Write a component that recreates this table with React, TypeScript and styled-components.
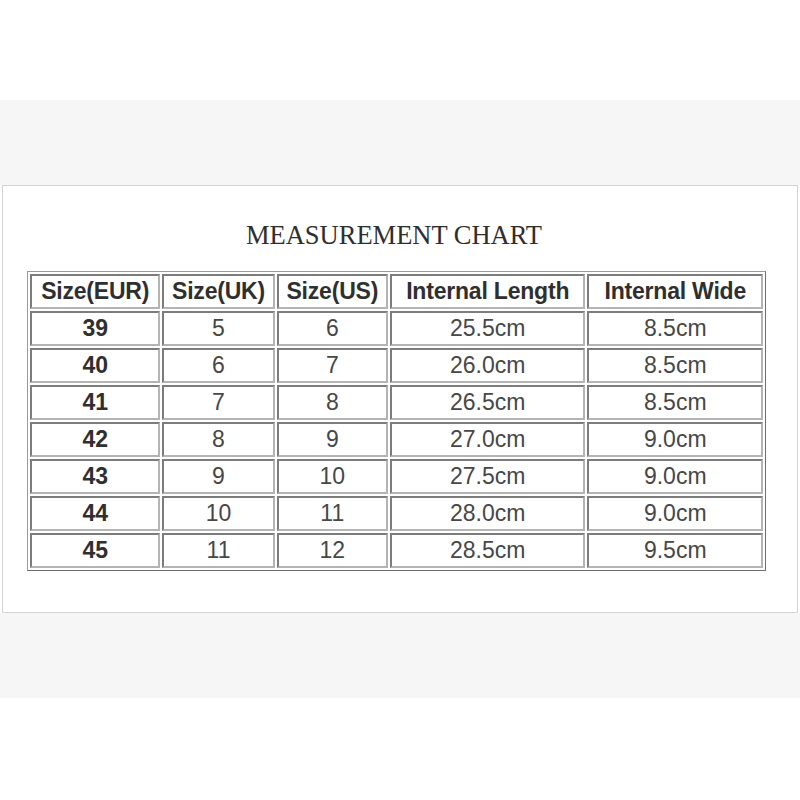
import styled, { createGlobalStyle } from "styled-components";

const GlobalStyle = createGlobalStyle`
  html, body {
    margin: 0;
    padding: 0;
    background: #ffffff;
  }
`;

const StyledPage = styled.div`
  width: 800px;
  height: 800px;
  display: flex;
  flex-direction: column;
  background: #ffffff;
`;
const StyledBand = styled.div<{ $height: number }>`
  height: ${(p) => p.$height}px;
  flex-shrink: 0;
  background: #f6f6f6;
`;
const StyledSpacer = styled.div<{ $height: number }>`
  height: ${(p) => p.$height}px;
  flex-shrink: 0;
`;
const StyledPanel = styled.div`
  height: 428px;
  box-sizing: border-box;
  margin: 0 2px;
  border: 1px solid #d4d4d4;
  background: #ffffff;
  display: flex;
  flex-direction: column;
  align-items: flex-start;
  padding: 32px 0 0 24px;
`;
const StyledTitle = styled.h1`
  align-self: center;
  margin: 0 0 19px -36px;
  font-family: "Liberation Serif", "Times New Roman", serif;
  font-weight: normal;
  font-size: 26.5px;
  line-height: 34px;
  color: #2e2e2e;
`;
const StyledTable = styled.table`
  width: 739px;
  table-layout: fixed;
  border-collapse: separate;
  border-spacing: 2px;
  border: 1px solid #9a9a9a;
  border-right-color: #6e6e6e;
  border-bottom-color: #6e6e6e;
`;
const StyledCell = styled.td<{ $bold?: boolean; $head?: boolean }>`
  height: 35px;
  box-sizing: border-box;
  padding: 0;
  border: 2px solid #7c7c7c;
  border-right-color: #b4b4b4;
  border-bottom-color: #b4b4b4;
  text-align: center;
  vertical-align: middle;
  font-family: "Liberation Sans", Arial, sans-serif;
  font-size: 23px;
  line-height: 1;
  font-weight: ${(p) => (p.$bold ? 700 : 400)};
  color: ${(p) => (p.$bold ? "#2f2f2f" : "#474747")};
  letter-spacing: ${(p) => (p.$head ? "-0.2px" : "0")};
`;

const columns = [130, 112, 111, 195, 175];
const headers = ["Size(EUR)", "Size(UK)", "Size(US)", "Internal Length", "Internal Wide"];
const rows = [
  ["39", "5", "6", "25.5cm", "8.5cm"],
  ["40", "6", "7", "26.0cm", "8.5cm"],
  ["41", "7", "8", "26.5cm", "8.5cm"],
  ["42", "8", "9", "27.0cm", "9.0cm"],
  ["43", "9", "10", "27.5cm", "9.0cm"],
  ["44", "10", "11", "28.0cm", "9.0cm"],
  ["45", "11", "12", "28.5cm", "9.5cm"],
];

export default function App() {
  return (
    <StyledPage>
      <GlobalStyle />
      <StyledSpacer $height={100} />
      <StyledBand $height={85} />
      <StyledPanel>
        <StyledTitle>MEASUREMENT CHART</StyledTitle>
        <StyledTable>
          <colgroup>
            {columns.map((w, i) => (
              <col key={i} style={{ width: w }} />
            ))}
          </colgroup>
          <thead>
            <tr>
              {headers.map((h) => (
                <StyledCell as="th" key={h} $bold $head>
                  {h}
                </StyledCell>
              ))}
            </tr>
          </thead>
          <tbody>
            {rows.map((row) => (
              <tr key={row[0]}>
                {row.map((v, i) => (
                  <StyledCell key={i} $bold={i === 0}>
                    {v}
                  </StyledCell>
                ))}
              </tr>
            ))}
          </tbody>
        </StyledTable>
      </StyledPanel>
      <StyledBand $height={85} />
    </StyledPage>
  );
}
